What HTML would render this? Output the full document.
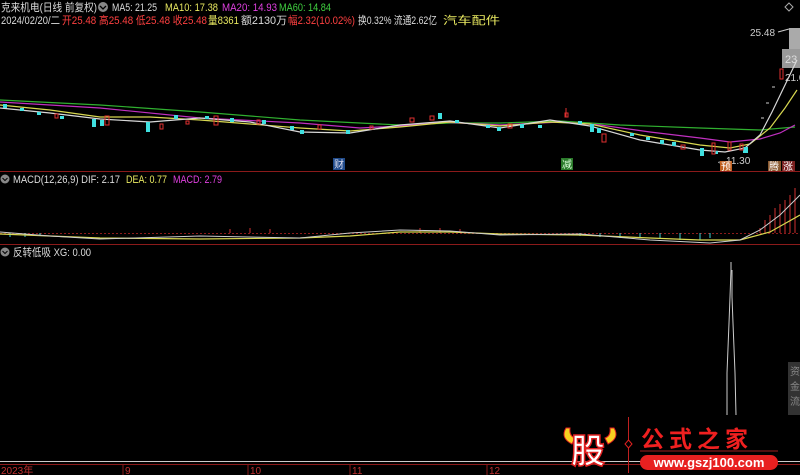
<!DOCTYPE html>
<html><head><meta charset="utf-8"><style>
html,body{margin:0;padding:0;background:#000;width:800px;height:475px;overflow:hidden}
svg{display:block}
text{font-family:"Liberation Sans","Noto Sans CJK SC",sans-serif}
</style></head><body>
<svg width="800" height="475" viewBox="0 0 800 475" xmlns="http://www.w3.org/2000/svg">
<rect width="800" height="475" fill="#000"/>
<!-- header -->
<g font-size="11" lengthAdjust="spacingAndGlyphs">
<text x="1" y="11" fill="#dcdcdc" textLength="96" lengthAdjust="spacingAndGlyphs">克来机电(日线 前复权)</text>
<text x="112" y="11" fill="#dcdcdc" textLength="45" lengthAdjust="spacingAndGlyphs">MA5: 21.25</text>
<text x="165" y="11" fill="#e8e860" textLength="53" lengthAdjust="spacingAndGlyphs">MA10: 17.38</text>
<text x="222" y="11" fill="#e040e0" textLength="55" lengthAdjust="spacingAndGlyphs">MA20: 14.93</text>
<text x="279" y="11" fill="#40d040" textLength="52" lengthAdjust="spacingAndGlyphs">MA60: 14.84</text>
<text x="1" y="24" fill="#dcdcdc" textLength="59" lengthAdjust="spacingAndGlyphs">2024/02/20/二</text>
<text x="62" y="24" fill="#ff4040" textLength="145" lengthAdjust="spacingAndGlyphs">开25.48 高25.48 低25.48 收25.48</text>
<text x="208" y="24" fill="#e8e860" textLength="31" lengthAdjust="spacingAndGlyphs">量8361</text>
<text x="241" y="24" fill="#dcdcdc" textLength="46" lengthAdjust="spacingAndGlyphs">额2130万</text>
<text x="288" y="24" fill="#ff4040" textLength="67" lengthAdjust="spacingAndGlyphs">幅2.32(10.02%)</text>
<text x="358" y="24" fill="#dcdcdc" textLength="79" lengthAdjust="spacingAndGlyphs">换0.32% 流通2.62亿</text>
<text x="443" y="24" fill="#e8e860" textLength="57" lengthAdjust="spacingAndGlyphs">汽车配件</text>
</g>
<circle cx="103" cy="7" r="5" fill="#888"/><path d="M100,6 L103,9 L106,6" stroke="#000" stroke-width="1.3" fill="none"/>
<path d="M789,3 L793,7 L789,11 L785,7 Z" stroke="#aaa" fill="none"/>
<!-- right price boxes -->
<rect x="789" y="28" width="11" height="21" fill="#aaa"/>
<rect x="782" y="49" width="18" height="19" fill="#999"/>
<text x="785" y="63" font-size="11" fill="#ddd">23</text>
<text x="750" y="36" font-size="10" fill="#ccc">25.48</text>
<line x1="778" y1="32" x2="789" y2="29" stroke="#ccc"/>
<rect x="780" y="69" width="3" height="10" fill="none" stroke="#e03030"/>
<text x="785" y="81" font-size="10" fill="#ccc">21.0</text>
<g stroke="#ccc"><line x1="772" y1="87" x2="775" y2="87"/><line x1="766" y1="103" x2="769" y2="103"/><line x1="761" y1="118" x2="764" y2="118"/></g>
<!-- MAs -->
<g fill="none" stroke-width="1.2">
<polyline stroke="#30b030" points="0,100 100,105 200,112 300,120 400,125 450,123 500,123 560,121 620,125 700,128 760,130 795,127"/>
<polyline stroke="#c030c0" points="0,102 100,108 200,118 300,123 360,128 400,126 440,122 500,125 560,122 600,125 650,132 700,138 730,142 760,139 780,133 795,125"/>
<polyline stroke="#d8d850" points="0,105 50,110 100,117 150,117 200,120 250,124 300,128 350,131 400,127 450,122 500,126 550,122 590,124 640,135 700,145 730,148 750,144 770,128 785,108 797,90"/>
<polyline stroke="#d8d8d8" points="0,108 50,113 100,119 150,122 200,118 250,122 300,132 350,133 400,125 450,121 500,128 550,120 590,126 640,140 700,150 725,152 745,148 760,135 772,112 785,85 797,60"/>
</g>
<!-- candles -->
<g fill="#40e0e0">
<rect x="3" y="104" width="4" height="4"/><rect x="20" y="108" width="4" height="3"/><rect x="37" y="112" width="4" height="3"/><rect x="60" y="116" width="4" height="3"/><rect x="92" y="119" width="4" height="8"/><rect x="100" y="120" width="4" height="6"/><rect x="146" y="122" width="4" height="10"/><rect x="174" y="115" width="4" height="4"/><rect x="205" y="116" width="4" height="3"/><rect x="230" y="118" width="4" height="4"/><rect x="262" y="120" width="4" height="4"/><rect x="290" y="126" width="4" height="4"/><rect x="300" y="130" width="4" height="4"/><rect x="346" y="130" width="4" height="4"/><rect x="438" y="113" width="4" height="6"/><rect x="455" y="120" width="4" height="3"/><rect x="486" y="125" width="4" height="3"/><rect x="497" y="127" width="4" height="4"/><rect x="520" y="124" width="4" height="4"/><rect x="538" y="125" width="4" height="3"/><rect x="578" y="121" width="4" height="3"/><rect x="590" y="124" width="4" height="8"/><rect x="597" y="128" width="4" height="5"/><rect x="630" y="133" width="4" height="3"/><rect x="646" y="137" width="4" height="3"/><rect x="660" y="140" width="4" height="4"/><rect x="672" y="142" width="4" height="4"/><rect x="700" y="148" width="4" height="8"/><rect x="715" y="151" width="3" height="3"/><rect x="743" y="147" width="5" height="6"/>
</g>
<g fill="none" stroke="#e03030">
<rect x="55" y="114" width="3" height="4"/><rect x="105" y="116" width="4" height="9"/><rect x="160" y="124" width="3" height="5"/><rect x="186" y="121" width="3" height="3"/><rect x="214" y="116" width="4" height="9"/><rect x="257" y="120" width="3" height="4"/><rect x="318" y="125" width="3" height="4"/><rect x="370" y="126" width="3" height="3"/><rect x="410" y="118" width="4" height="4"/><rect x="430" y="116" width="4" height="4"/><rect x="508" y="124" width="4" height="4"/><rect x="565" y="113" width="3" height="4"/><rect x="602" y="134" width="4" height="8"/><rect x="681" y="145" width="4" height="4"/><rect x="712" y="143" width="3" height="11"/><rect x="728" y="142" width="3" height="8"/><rect x="740" y="144" width="3" height="6"/>
</g>
<g stroke="#e03030"><line x1="566" y1="108" x2="566" y2="117"/></g>
<text x="716" y="164" font-size="10" fill="#ccc">←11.30</text>
<!-- markers -->
<rect x="333" y="158" width="12" height="12" fill="#1f4a8a"/><text x="334" y="168" font-size="10" fill="#dde">财</text>
<rect x="561" y="158" width="12" height="12" fill="#2a7a2a"/><text x="562" y="168" font-size="10" fill="#dfd">减</text>
<rect x="720" y="161" width="12" height="11" fill="#c06020"/><text x="721" y="170" font-size="10" fill="#fff">预</text>
<rect x="768" y="161" width="13" height="11" fill="#8a5a30"/><text x="769" y="170" font-size="10" fill="#fff">腾</text>
<rect x="782" y="161" width="13" height="11" fill="#7a2020"/><text x="783" y="170" font-size="10" fill="#fff">涨</text>
<!-- separators -->
<line x1="0" y1="171.5" x2="800" y2="171.5" stroke="#8b1a1a"/>
<line x1="0" y1="244.5" x2="800" y2="244.5" stroke="#8b1a1a"/>
<!-- MACD -->
<circle cx="5" cy="179" r="4.5" fill="#888"/><path d="M2.5,178 L5,180.5 L7.5,178" stroke="#000" fill="none"/>
<text x="13" y="183" font-size="11" fill="#dcdcdc" textLength="107" lengthAdjust="spacingAndGlyphs">MACD(12,26,9) DIF: 2.17</text>
<text x="126" y="183" font-size="11" fill="#e8e860" textLength="41" lengthAdjust="spacingAndGlyphs">DEA: 0.77</text>
<text x="173" y="183" font-size="11" fill="#e040e0" textLength="49" lengthAdjust="spacingAndGlyphs">MACD: 2.79</text>
<line x1="0" y1="233.5" x2="800" y2="233.5" stroke="#8b1a1a" stroke-dasharray="2,2"/>
<g stroke="#40d0d0"><line x1="10" y1="233" x2="10" y2="237"/><line x1="25" y1="233" x2="25" y2="237"/><line x1="40" y1="233" x2="40" y2="236"/><line x1="580" y1="233" x2="580" y2="236"/><line x1="600" y1="233" x2="600" y2="237"/><line x1="620" y1="233" x2="620" y2="238"/><line x1="640" y1="233" x2="640" y2="238"/><line x1="660" y1="233" x2="660" y2="239"/><line x1="680" y1="233" x2="680" y2="240"/><line x1="700" y1="233" x2="700" y2="240"/><line x1="710" y1="233" x2="710" y2="238"/></g>
<g stroke="#d03030"><line x1="230" y1="233" x2="230" y2="229"/><line x1="250" y1="233" x2="250" y2="228"/><line x1="270" y1="233" x2="270" y2="229"/><line x1="420" y1="233" x2="420" y2="228"/><line x1="440" y1="233" x2="440" y2="228"/><line x1="460" y1="233" x2="460" y2="229"/><line x1="760" y1="233" x2="760" y2="228"/><line x1="765" y1="233" x2="765" y2="220"/><line x1="770" y1="233" x2="770" y2="215"/><line x1="775" y1="233" x2="775" y2="208"/><line x1="780" y1="233" x2="780" y2="204"/><line x1="785" y1="233" x2="785" y2="200"/><line x1="790" y1="233" x2="790" y2="195"/><line x1="795" y1="233" x2="795" y2="188"/></g>
<polyline fill="none" stroke="#d8d850" stroke-width="1.2" points="0,234 50,236 100,238 200,239 300,238 350,236 400,232 450,232 500,234 580,235 650,238 700,240 740,240 770,232 800,215"/>
<polyline fill="none" stroke="#ccc" stroke-width="1" points="0,232 50,236 100,239 200,236 300,238 350,233 400,230 450,231 500,235 580,234 650,240 710,243 740,240 760,230 780,215 800,195"/>
<!-- bottom indicator -->
<circle cx="5" cy="252" r="4.5" fill="#888"/><path d="M2.5,251 L5,253.5 L7.5,251" stroke="#000" fill="none"/>
<text x="13" y="256" font-size="11" fill="#dcdcdc" textLength="78" lengthAdjust="spacingAndGlyphs">反转低吸 XG: 0.00</text>
<g stroke="#ccc" fill="none" stroke-width="1">
<polyline points="727,415 727,373 728,348 729,323 730,297 731,270 731,262"/>
<polyline points="736,415 735,373 734,348 733,323 732,297 732,270"/>
</g>
<rect x="788" y="362" width="12" height="53" fill="#333"/>
<text x="790" y="375" font-size="10" fill="#888">资</text><text x="790" y="390" font-size="10" fill="#888">金</text><text x="790" y="405" font-size="10" fill="#888">流</text>
<!-- axis -->
<line x1="0" y1="461.5" x2="800" y2="461.5" stroke="#ccc"/>
<line x1="0" y1="464.5" x2="800" y2="464.5" stroke="#8b1a1a"/>
<g stroke="#8b1a1a"><line x1="123" y1="464" x2="123" y2="475"/><line x1="248" y1="464" x2="248" y2="475"/><line x1="350" y1="464" x2="350" y2="475"/><line x1="487" y1="464" x2="487" y2="475"/></g>
<g font-size="10" fill="#c03030"><text x="1" y="474">2023年</text><text x="125" y="474">9</text><text x="250" y="474">10</text><text x="352" y="474">11</text><text x="489" y="474">12</text></g>
<!-- logo -->
<path d="M566,428 Q560,438 572,444 L575,438 Q569,436 570,428 Z" fill="#f8d020" stroke="#e02020"/>
<path d="M614,428 Q620,438 608,444 L605,438 Q611,436 610,428 Z" fill="#f8d020" stroke="#e02020"/>
<text x="571" y="463" font-size="34" font-weight="bold" fill="#fff" stroke="#e02020" stroke-width="1.5" font-family="Noto Sans CJK SC,sans-serif">股</text>
<line x1="628.5" y1="417" x2="628.5" y2="473" stroke="#c02020"/>
<path d="M628.5,440 L632,444 L628.5,448 L625,444 Z" fill="#000" stroke="#e02020"/>
<text x="641" y="447" font-size="23" font-weight="bold" fill="#f02020" letter-spacing="5" font-family="Noto Serif CJK SC,serif">公式之家</text>
<line x1="640" y1="451" x2="778" y2="451" stroke="#a02020"/>
<rect x="640" y="455" width="138" height="15" rx="7.5" fill="#e82020"/>
<text x="709" y="467" font-size="13" font-weight="bold" fill="#fff" text-anchor="middle">www.gszj100.com</text>
</svg>
</body></html>
